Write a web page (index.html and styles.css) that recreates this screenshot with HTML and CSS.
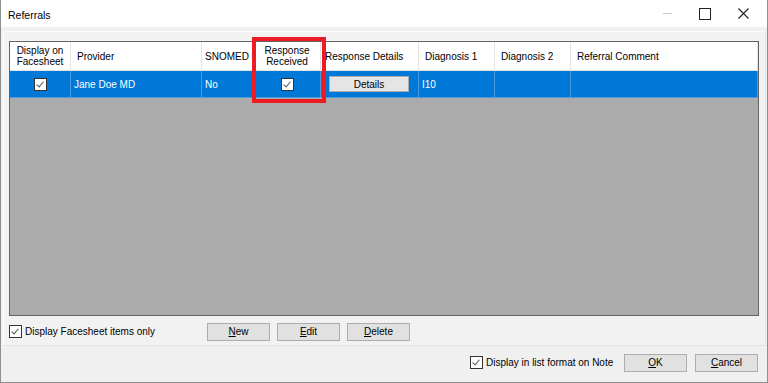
FILE: index.html
```html
<!DOCTYPE html>
<html lang="en">
    <head>
        <meta charset="UTF-8" />
        <title>Referrals</title>
        <link rel="stylesheet" href="styles.css">
    </head>
    <body>
        <div class="window">
            <div class="titlebar">
                <span class="title">Referrals</span>
                <div class="controls">
                    <span class="ctl min"></span>
                    <span class="ctl max"></span>
                    <span class="ctl close">
                        <svg width="11" height="11" viewBox="0 0 11 11"><path d="M0.5 0.5 L10.5 10.5 M10.5 0.5 L0.5 10.5" stroke="#222" stroke-width="1.1" fill="none"/></svg>
                    </span>
                </div>
            </div>

            <div class="client">
                <div class="panel">
                    <div class="grid">
                        <div class="row head">
                            <div class="cell center">Display on<br>Facesheet</div>
                            <div class="cell">Provider</div>
                            <div class="cell right">SNOMED</div>
                            <div class="cell center">Response<br>Received</div>
                            <div class="cell tight">Response Details</div>
                            <div class="cell">Diagnosis 1</div>
                            <div class="cell">Diagnosis 2</div>
                            <div class="cell">Referral Comment</div>
                        </div>
                        <div class="row selected">
                            <div class="cell center"><span class="check on"></span></div>
                            <div class="cell narrow">Jane Doe MD</div>
                            <div class="cell narrow">No</div>
                            <div class="cell center"><span class="check on"></span></div>
                            <div class="cell center"><button class="btn details">Details</button></div>
                            <div class="cell narrow">I10</div>
                            <div class="cell"></div>
                            <div class="cell"></div>
                        </div>
                        <div class="highlight"></div>
                    </div>

                    <div class="panel-bar">
                        <label class="option"><span class="check on"></span>Display Facesheet items only</label>
                        <div class="actions">
                            <button class="btn"><u>N</u>ew</button>
                            <button class="btn"><u>E</u>dit</button>
                            <button class="btn"><u>D</u>elete</button>
                        </div>
                    </div>
                </div>

                <div class="footer">
                    <label class="option"><span class="check on"></span>Display in list format on Note</label>
                    <button class="btn"><u>O</u>K</button>
                    <button class="btn"><u>C</u>ancel</button>
                </div>
            </div>
        </div>
    </body>
</html>
```

FILE: styles.css
```css
* {
    margin: 0;
    padding: 0;
    box-sizing: border-box;
}

body {
    font-family: 'Liberation Sans', Arial, sans-serif;
    font-size: 10px;
    color: #000;
    background: #fff;
}

.window {
    width: 768px;
    height: 383px;
    display: flex;
    flex-direction: column;
    border: 1px solid #8f8f8f;
    border-top: none;
    background: #f0f0f0;
}

.titlebar {
    height: 27px;
    background: #fff;
    display: flex;
    align-items: center;
    justify-content: space-between;
    padding-left: 7px;
}

.title {
    font-size: 10.5px;
    margin-top: 2px;
}

.controls {
    display: flex;
    height: 100%;
}

.ctl {
    width: 37px;
    display: flex;
    align-items: center;
    justify-content: center;
}

.ctl.min::before {
    content: "";
    width: 9px;
    height: 1px;
    background: #c8c8c8;
}

.ctl.max::before {
    content: "";
    width: 10px;
    height: 10px;
    border: 1px solid #222;
}

.ctl.close {
    width: 44px;
    padding-right: 4px;
}

.client {
    flex: 1;
    display: flex;
    flex-direction: column;
}

.panel {
    margin: 4px 1px 0 2px;
    height: 315px;
    background: #f2f2f2;
    border-top: 1px solid #fbfbfb;
    border-left: 1px solid #fbfbfb;
    border-bottom: 1px solid #e2e2e2;
    border-right: 1px solid #e2e2e2;
    padding: 9px 0 0 5px;
    display: flex;
    flex-direction: column;
}

.grid {
    position: relative;
    width: 750px;
    height: 276px;
    border: 1px solid #646464;
    background: #ababab;
}

.row {
    display: grid;
    grid-template-columns: 61px 131px 52px 67px 98px 76px 76px 1fr;
}

.row.head {
    height: 29px;
    background: #fff;
}

.row.head .cell {
    border-right: 1px solid #e3e3e3;
    border-bottom: 1px solid #e3e3e3;
}

.row.head .cell.center {
    line-height: 11px;
}

.row.selected {
    height: 27px;
    background: #0078d7;
    color: #fff;
}

.row.selected .cell {
    border-right: 1px solid #4b9be0;
    border-bottom: 1px solid #4b9be0;
}

.cell {
    display: flex;
    align-items: center;
    padding: 0 6px;
    white-space: nowrap;
    overflow: hidden;
}

.cell.narrow {
    padding-left: 3px;
}

.cell.center {
    justify-content: center;
    text-align: center;
    padding: 0;
}

.cell.right {
    justify-content: flex-end;
    padding-right: 4px;
}

.cell.tight {
    padding-left: 4px;
}

.check {
    display: inline-block;
    width: 13px;
    height: 13px;
    background: #fff;
    border: 1px solid #333;
    position: relative;
    flex-shrink: 0;
}

.check.on::after {
    content: "";
    position: absolute;
    left: 3px;
    top: 1px;
    width: 3px;
    height: 6px;
    border-right: 1.5px solid #555;
    border-bottom: 1.5px solid #555;
    transform: rotate(40deg);
}

.btn {
    font-family: inherit;
    font-size: 10px;
    color: #000;
    height: 18px;
    background: #e1e1e1;
    border: 1px solid #adadad;
    width: 63px;
}

.btn.details {
    width: 80px;
    height: 16px;
    margin-right: 1px;
    background: #e5e5e5;
}

.highlight {
    position: absolute;
    left: 242px;
    top: -5px;
    width: 74px;
    height: 66px;
    border: 4px solid #ed1c24;
}

.panel-bar {
    display: flex;
    align-items: center;
    height: 29px;
    padding-top: 2px;
}

.option {
    display: flex;
    align-items: center;
    gap: 3px;
    white-space: nowrap;
}

.panel-bar .option {
    width: 198px;
}

.actions {
    display: flex;
    gap: 7px;
}

.footer {
    display: flex;
    align-items: center;
    height: 33px;
    padding-left: 469px;
}

.footer .option {
    width: 154px;
}

.footer .btn + .btn {
    margin-left: 8px;
}
```
